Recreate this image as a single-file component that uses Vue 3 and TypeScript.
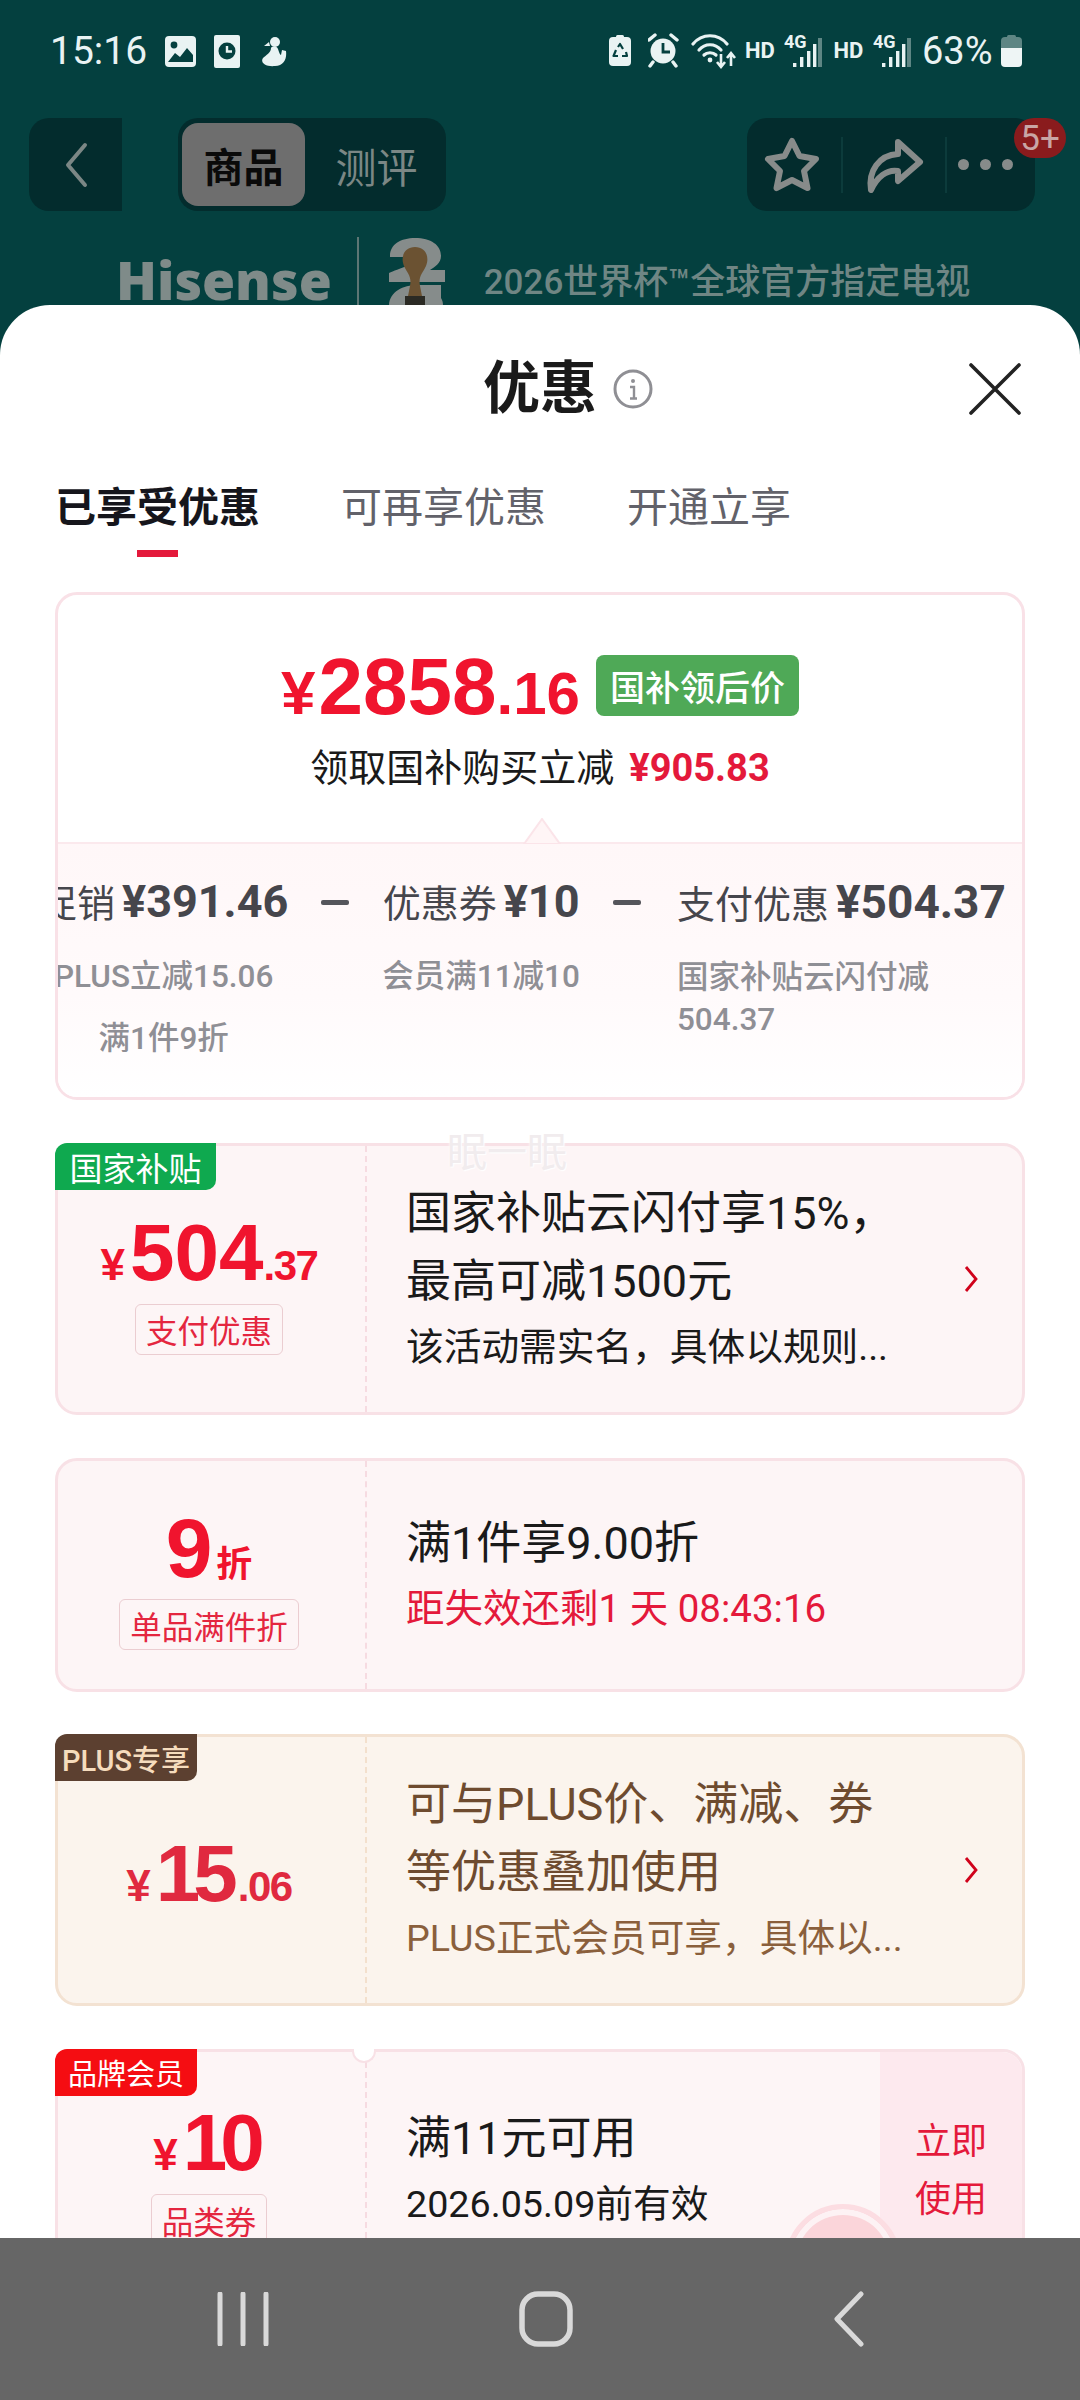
<script setup lang="ts">
interface Coupon {
  kind: string
  tag?: string
  tagKind?: string
  yen?: string
  major: string
  minor: string
  badge?: string
  title: string[]
  desc?: string
  timer?: string
  arrow?: boolean
  action?: boolean
}

const coupons: Coupon[] = [
  {
    kind: 'red', tag: '国家补贴', tagKind: 'tag-green', yen: '¥', major: '504', minor: '.37', badge: '支付优惠',
    title: ['国家补贴云闪付享15%，', '最高可减1500元'], desc: '该活动需实名，具体以规则...', arrow: true
  },
  {
    kind: 'red short', major: '9', minor: '折', badge: '单品满件折',
    title: ['满1件享9.00折'], timer: '距失效还剩1 天 08:43:16'
  },
  {
    kind: 'plus narrow', tag: 'PLUS专享', tagKind: 'tag-brown', yen: '¥', major: '15', minor: '.06',
    title: ['可与PLUS价、满减、券', '等优惠叠加使用'], desc: 'PLUS正式会员可享，具体以...', arrow: true
  },
  {
    kind: 'red member narrow', tag: '品牌会员', tagKind: 'tag-crimson', yen: '¥', major: '10', minor: '', badge: '品类券',
    title: ['满11元可用'], desc: '2026.05.09前有效', action: true
  }
]

const tabs: string[] = ['已享受优惠', '可再享优惠', '开通立享']
const bars = [
  { x: 13, h: 4, y: 32 },
  { x: 20, h: 10, y: 26 },
  { x: 27, h: 16, y: 20 },
  { x: 33, h: 23, y: 13 }
]
</script>

<template>
  <div class="page">
    <div class="status">
      <div class="status-left">
        <span class="time">15:16</span>
        <svg class="ic-a" width="31" height="40" viewBox="0 0 31 40">
          <rect x="0" y="5" width="31" height="31" rx="4" fill="#e9f3f3" />
          <circle cx="9" cy="14" r="3.4" fill="#04403f" />
          <path d="M3 31 L10 22 L15 26 L22 17 L28 24 L28 31 Z" fill="#04403f" />
        </svg>
        <svg class="ic-b" width="26" height="40" viewBox="0 0 26 40">
          <rect x="0" y="4" width="26" height="33" rx="2" fill="#e9f3f3" />
          <circle cx="13" cy="20" r="8.5" fill="#04403f" />
          <path d="M13 15 V20.5 H18" fill="none" stroke="#e9f3f3" stroke-width="2.4" />
        </svg>
        <svg class="ic-c" width="27" height="40" viewBox="0 0 27 40">
          <circle cx="14" cy="11" r="5" fill="#e9f3f3" />
          <path d="M8 11 L3 15 L9 15 Z" fill="#e9f3f3" />
          <path d="M10 17 C11 15 16 15 17 18 C18 21 19 24 20 24 L21 19 L25 20 C26 28 23 35 14 35 C4 36 -1 31 2 27 C5 24 10 22 10 17 Z" fill="#e9f3f3" />
        </svg>
      </div>
      <div class="status-right">
        <svg width="39" height="40" viewBox="0 0 39 40">
          <rect x="7" y="4" width="8" height="4" rx="1.5" fill="#e9f3f3" />
          <rect x="0" y="6" width="22" height="29" rx="4" fill="#e9f3f3" />
          <path d="M9 16 L11 13 L14 18 M17 21 L18 25 H13 M9 25 H4.500 L7 19" fill="none" stroke="#04403f" stroke-width="2.2" stroke-linejoin="round" />
        </svg>
        <svg width="43" height="40" viewBox="0 0 43 40">
          <circle cx="15" cy="20" r="12.5" fill="#e9f3f3" />
          <path d="M15 12 V21 H22" fill="none" stroke="#04403f" stroke-width="2.8" />
          <path d="M1 9 L7 4 M23 4 L29 9 M5 31 L2 35 M25 31 L28 35" stroke="#e9f3f3" stroke-width="3.4" stroke-linecap="round" fill="none" />
        </svg>
        <svg width="54" height="40" viewBox="0 0 54 40">
          <path d="M2 13 C11 2 27 2 36 13" fill="none" stroke="#e9f3f3" stroke-width="3.2" stroke-linecap="round" />
          <path d="M8 19 C14 12 24 12 30 19" fill="none" stroke="#e9f3f3" stroke-width="3.2" stroke-linecap="round" />
          <path d="M13 24 C16 21 22 21 25 24" fill="none" stroke="#e9f3f3" stroke-width="3.2" stroke-linecap="round" />
          <circle cx="19" cy="29" r="2.4" fill="#e9f3f3" />
          <path d="M30 23 V35 M26 31 L30 36 L34 31 M40 35 V23 M36 27 L40 22 L44 27" fill="none" stroke="#e9f3f3" stroke-width="2.6" />
        </svg>
        <template v-for="n in 2" :key="n">
          <svg :width="n === 1 ? 39 : 40" height="40" viewBox="0 0 39 40">
            <text x="0" y="27" class="hd">HD</text>
          </svg>
          <svg width="49" height="40" viewBox="0 0 49 40">
            <text x="0" y="17" class="fg">4G</text>
            <rect v-for="b in bars" :key="b.x" :x="b.x - 4" :y="b.y" width="3.4" :height="b.h" fill="#e9f3f3" />
            <rect x="34" y="7" width="4" height="29" fill="#5e8684" />
          </svg>
        </template>
        <span class="pct">63%</span>
        <svg width="21" height="40" viewBox="0 0 21 40">
          <rect x="6" y="4" width="9" height="4" rx="1.5" fill="#5e8684" />
          <path d="M0 17 V10 Q0 6 4 6 H17 Q21 6 21 10 V17 Z" fill="#5e8684" />
          <path d="M0 17 H21 V32 Q21 36 17 36 H4 Q0 36 0 32 Z" fill="#eef5f5" />
        </svg>
      </div>
    </div>

    <div class="topbar">
      <div class="back">
        <svg width="26" height="46" viewBox="0 0 26 46">
          <path d="M22 3 L5 23 L22 43" fill="none" stroke="#7b8785" stroke-width="4" stroke-linecap="round" stroke-linejoin="round" />
        </svg>
      </div>
      <div class="seg">
        <span class="seg-on">商品</span>
        <span class="seg-off">测评</span>
      </div>
      <div class="actions">
        <svg width="60" height="60" viewBox="0 0 60 60">
          <path d="M30 6 L37.500 21 L54 24 L42 36 L45.500 53 L30 45 L14.500 53 L18 36 L6 24 L22.500 21 Z" fill="none" stroke="#878b8a" stroke-width="6" stroke-linejoin="round" />
        </svg>
        <i class="sep"></i>
        <svg width="65" height="60" viewBox="0 0 65 60">
          <path d="M37 7 L59 27 L37 46 V36 C26 34 16 42 10 55 C7 36 18 20 37 19 Z" fill="none" stroke="#878b8a" stroke-width="6" stroke-linejoin="round" />
        </svg>
        <i class="sep"></i>
        <div class="dots"><i></i><i></i><i></i></div>
        <span class="count">5+</span>
      </div>
    </div>

    <div class="banner">
      <span class="brand">Hisense</span>
      <i class="brand-sep"></i>
      <svg class="cup" width="60" height="68" viewBox="0 0 60 68">
        <path d="M5 18 C5 6 16 0 30 0 C46 0 56 7 56 18 C56 25 50 29 45 32 H60 V44 H4 V35 C12 31 34 25 38 19 L22 19 H5 Z" fill="#868c8b" />
        <path d="M4 68 C4 54 18 47 32 47 H56 V60 C58 63 58 66 58 68 Z" fill="#868c8b" />
        <path d="M30 9 C40 9 45 18 41 28 C38 35 33 38 35 48 L37 58 H23 L25 48 C27 38 22 35 19 28 C15 18 20 9 30 9 Z" fill="#6b5232" />
        <path d="M20 58 H40 V68 H20 Z" fill="#2b2a24" />
      </svg>
      <span class="slogan">2026世界杯™全球官方指定电视</span>
    </div>

    <main class="sheet">
      <span class="float-tip">眠一眠</span>

      <header class="head">
        <span></span>
        <h1 class="title">优惠</h1>
        <div class="head-right">
          <svg width="40" height="40" viewBox="0 0 40 40">
            <circle cx="20" cy="20" r="18" fill="none" stroke="#8f8f94" stroke-width="3" />
            <circle cx="20" cy="12" r="2" fill="#8f8f94" />
            <path d="M17 18 H21 V29 M17 29.500 H24" fill="none" stroke="#8f8f94" stroke-width="2.4" />
          </svg>
          <svg width="52" height="52" viewBox="0 0 52 52">
            <path d="M2 2 L50 50 M50 2 L2 50" stroke="#222" stroke-width="3.600" stroke-linecap="round" />
          </svg>
        </div>
      </header>

      <nav class="tabs">
        <div v-for="(t, i) in tabs" :key="t" class="tab" :class="{ active: i === 0 }">
          <span>{{ t }}</span>
          <i v-if="i === 0"></i>
        </div>
      </nav>

      <section class="summary">
        <div class="sum-top">
          <div class="sum-price">
            <span class="price"><small class="y">¥</small>2858<small class="d">.16</small></span>
            <span class="green">国补领后价</span>
          </div>
          <p class="sum-line">领取国补购买立减<b>¥905.83</b></p>
          <svg class="arrow-up" width="40" height="26" viewBox="0 0 40 26">
            <path d="M2 26 L20 1 L38 26 Z" fill="#fff5f6" stroke="#fbe4e9" stroke-width="2" />
          </svg>
        </div>
        <div class="sum-bottom">
          <div class="sum-row">
            <div class="col center">
              <div class="col-h">促销<b>¥391.46</b></div>
              <p>PLUS立减15.06</p>
              <p class="gap">满1件9折</p>
            </div>
            <i class="minus"></i>
            <div class="col center">
              <div class="col-h">优惠券<b>¥10</b></div>
              <p>会员满11减10</p>
            </div>
            <i class="minus"></i>
            <div class="col last">
              <div class="col-h">支付优惠<b>¥504.37</b></div>
              <p class="wrap">国家补贴云闪付减504.37</p>
            </div>
          </div>
        </div>
      </section>

      <section class="list">
        <article v-for="c in coupons" :key="c.major" class="coupon" :class="c.kind">
          <span v-if="c.tag" class="tag" :class="c.tagKind">{{ c.tag }}</span>
          <div class="left">
            <div class="amount">
              <small v-if="c.yen" class="a-y">{{ c.yen }}</small><span class="a-m">{{ c.major }}</span><small class="a-d">{{ c.minor }}</small>
            </div>
            <span v-if="c.badge" class="badge">{{ c.badge }}</span>
          </div>
          <div class="right">
            <div class="body">
              <div v-for="t in c.title" :key="t" class="c-title">{{ t }}</div>
              <div v-if="c.desc" class="c-desc">{{ c.desc }}</div>
              <div v-if="c.timer" class="c-timer">{{ c.timer }}</div>
            </div>
            <svg v-if="c.arrow" class="chev" width="14" height="26" viewBox="0 0 14 26">
              <path d="M2 1 L12 13 L2 25" fill="none" stroke="#d0021b" stroke-width="2.800" />
            </svg>
            <div v-if="c.action" class="use">立即<br />使用</div>
          </div>
          <template v-if="c.action">
            <i class="notch"></i>
            <i class="stamp"></i>
          </template>
        </article>
      </section>
    </main>

    <footer class="navbar">
      <div class="nav-cell">
        <svg width="52" height="54" viewBox="0 0 52 54">
          <path d="M3 2 V52 M26 2 V52 M49 2 V52" stroke="#d9d9d9" stroke-width="5" stroke-linecap="round" />
        </svg>
      </div>
      <div class="nav-cell">
        <svg width="54" height="56" viewBox="0 0 54 56">
          <rect x="3" y="3" width="48" height="50" rx="16" fill="none" stroke="#d9d9d9" stroke-width="5.500" />
        </svg>
      </div>
      <div class="nav-cell">
        <svg width="32" height="56" viewBox="0 0 32 56">
          <path d="M28 3 L4 28 L28 53" fill="none" stroke="#d9d9d9" stroke-width="5" stroke-linecap="round" stroke-linejoin="round" />
        </svg>
      </div>
    </footer>
  </div>
</template>

<style scoped>
.page, .page * { box-sizing: border-box; }
.page {
  width: 1080px;
  height: 2400px;
  overflow: hidden;
  display: flex;
  flex-direction: column;
  background: #04403f;
  font-family: Roboto, "Noto Sans CJK SC", sans-serif;
  color: #1a1a1a;
}
i { display: block; font-style: normal; }
p, h1 { margin: 0; }

.status {
  height: 102px;
  flex: none;
  display: flex;
  justify-content: space-between;
  align-items: center;
  padding: 0 58px 0 50px;
  color: #e9f3f3;
}
.status-left, .status-right { display: flex; align-items: center; }
.time { font-size: 39px; width: 96px; white-space: nowrap; }
.ic-a { margin-left: 19px; }
.ic-b { margin-left: 18px; }
.ic-c { margin-left: 21px; }
.hd { font: 700 22px Roboto, sans-serif; fill: #e9f3f3; }
.fg { font: 700 18px Roboto, sans-serif; fill: #e9f3f3; }
.pct { font-size: 38px; width: 79px; white-space: nowrap; }

.topbar {
  flex: none;
  height: 93px;
  margin-top: 16px;
  padding: 0 45px 0 29px;
  display: flex;
  align-items: stretch;
}
.back {
  width: 93px;
  background: #032c2d;
  border-radius: 20px 0 0 20px;
  display: flex;
  align-items: center;
  justify-content: center;
}
.seg {
  margin-left: 56px;
  width: 268px;
  background: #032c2d;
  border-radius: 20px;
  padding: 5px 4px;
  display: flex;
  align-items: center;
}
.seg-on {
  width: 123px;
  height: 83px;
  border-radius: 16px;
  background: #6e6e6e;
  color: #0a0a0a;
  font-size: 40px;
  font-weight: 700;
  display: flex;
  align-items: center;
  justify-content: center;
}
.seg-off {
  flex: 1;
  text-align: center;
  color: #7b8785;
  font-size: 41px;
  padding-left: 6px;
}
.actions {
  margin-left: auto;
  width: 288px;
  position: relative;
  background: #032c2d;
  border-radius: 20px;
  display: flex;
  align-items: center;
  padding-left: 15px;
}
.sep { width: 2px; height: 56px; background: #0c3b3b; margin: 0 18px 0 19px; flex: none; }
.dots { display: flex; gap: 11px; margin-left: -7px; }
.dots i { width: 11px; height: 11px; border-radius: 50%; background: #878b8a; }
.count {
  position: absolute;
  right: -31px;
  top: 0;
  width: 52px;
  height: 40px;
  border-radius: 20px;
  background: #8a1b1d;
  color: #c9a5a5;
  font-size: 35px;
  display: flex;
  align-items: center;
  justify-content: center;
}

.banner {
  flex: none;
  height: 94px;
  padding-left: 116px;
  display: flex;
  align-items: flex-start;
  overflow: hidden;
}
.brand {
  margin: 47px 25px 0 0;
  font: 800 53.500px/44px "Open Sans", sans-serif;
  color: #7f8b89;
  white-space: nowrap;
}
.brand-sep { width: 2px; height: 80px; margin-top: 26px; background: #5d7674; flex: none; }
.cup { margin: 27px 0 0 26px; flex: none; }
.slogan {
  margin: 50px 0 0 39px;
  font-size: 35px;
  line-height: 44px;
  font-weight: 500;
  color: #6f8684;
  white-space: nowrap;
}

.sheet {
  flex: 1;
  min-height: 0;
  position: relative;
  overflow: hidden;
  background: #fff;
  border-radius: 50px 50px 0 0;
  padding: 0 55px;
}
.float-tip {
  position: absolute;
  left: 447px;
  top: 826px;
  z-index: 3;
  font-size: 40px;
  line-height: 44px;
  color: #f1ecee;
  text-shadow: 0 0 3px #fff, 1px 1px 1px #fff;
}
.head {
  height: 168px;
  display: grid;
  grid-template-columns: 1fr auto 1fr;
  align-items: center;
}
.title { font-size: 57px; font-weight: 700; line-height: 60px; }
.head-right {
  display: flex;
  align-items: center;
  justify-content: space-between;
  padding: 0 4px 0 16px;
}
.tabs { display: flex; gap: 81px; }
.tab {
  display: flex;
  flex-direction: column;
  align-items: center;
  font-size: 41px;
  line-height: 70px;
  color: #62626a;
  height: 84px;
}
.tab.active { color: #16161c; font-weight: 700; }
.tab i { width: 41px; height: 7px; margin-top: 7px; background: #e4193b; flex: none; }

.summary {
  margin-top: 35px;
  height: 508px;
  border: 3px solid #f9e1e7;
  border-radius: 22px;
  overflow: hidden;
  display: flex;
  flex-direction: column;
}
.sum-top {
  height: 249px;
  flex: none;
  position: relative;
  padding-top: 50px;
  display: flex;
  flex-direction: column;
  align-items: center;
  border-bottom: 2px solid #fbe9ed;
}
.sum-price { display: flex; align-items: center; height: 90px; }
.price {
  font: 700 80px/90px "Liberation Sans", sans-serif;
  color: #f0142e;
}
.price .y { font-size: 62px; margin-right: 3px; }
.price .d { font-size: 60px; }
.green {
  margin-left: 16px;
  height: 61px;
  width: 203px;
  background: #4fa957;
  border-radius: 8px;
  color: #fff;
  font-size: 35px;
  font-weight: 500;
  display: flex;
  align-items: center;
  justify-content: center;
  margin-top: -10px;
  white-space: nowrap;
}
.sum-line {
  margin-top: 8px;
  font-size: 38px;
  line-height: 50px;
  color: #1a1a1a;
  white-space: nowrap;
}
.sum-line b { margin-left: 15px; color: #e4193b; font-weight: 700; font-size: 38px; }
.arrow-up { position: absolute; left: 464px; bottom: -2px; }
.sum-bottom {
  flex: 1;
  overflow: hidden;
  background: linear-gradient(#fff7f8, #fffafb 60%, #fff);
}
.sum-row {
  display: flex;
  align-items: flex-start;
  gap: 33px;
  margin-left: -19px;
  padding-top: 33px;
  width: 1100px;
}
.col { flex: none; display: flex; flex-direction: column; color: #8f8f95; }
.col.center { align-items: center; }
.col.last { margin-left: 3px; }
.col-h {
  font-size: 38px;
  line-height: 50px;
  color: #46464c;
  white-space: nowrap;
}
.col-h b { font-size: 45px; font-weight: 700; margin-left: 7px; }
.col.last .col-h b { font-size: 46px; }
.col p {
  font-size: 31.500px;
  line-height: 42px;
  margin-top: 27px;
  font-weight: 500;
  white-space: nowrap;
}
.col p.gap { margin-top: 20px; }
.col p.wrap { white-space: normal; width: 260px; word-break: break-all; }
.minus { flex: none; width: 28px; height: 5px; background: #55555b; margin-top: 23px; border-radius: 2px; }

.list { margin-top: 43px; display: flex; flex-direction: column; gap: 42.500px; }
.coupon {
  height: 272px;
  flex: none;
  position: relative;
  display: flex;
  border: 3px solid #f8e1e6;
  border-radius: 22px;
  background: #fdf5f6;
}
.coupon.short { height: 234px; }
.coupon.member { height: 242px; }
.coupon.plus { background: #fbf4ed; border-color: #f3e2d2; }
.tag {
  position: absolute;
  left: -3px;
  top: -3px;
  width: 161px;
  height: 47px;
  border-radius: 12px 0 10px 0;
  color: #fff;
  font-size: 33px;
  display: flex;
  align-items: center;
  justify-content: center;
  white-space: nowrap;
}
.tag-green { background: #0fa94f; }
.tag-brown { width: 142px; background: #5c4030; color: #f6dcbd; font-size: 29px; font-weight: 500; }
.tag-crimson { width: 142px; background: #f50d12; font-size: 29px; }
.left {
  flex: none;
  width: 309px;
  padding-right: 5px;
  border-right: 2px dashed #f6dbe1;
  display: flex;
  flex-direction: column;
  align-items: center;
  justify-content: center;
}
.plus .left { border-right-color: #f3e0cd; }
.amount {
  height: 90px;
  font: 700 80px/98px "Liberation Sans", sans-serif;
  color: #f0142e;
  white-space: nowrap;
}
.plus .amount { color: #e0293f; }
.narrow .a-m { letter-spacing: -7px; margin-right: 7px; }
.a-y { font-size: 44px; margin-right: 5px; }
.a-d { font-size: 42px; letter-spacing: -1.500px; }
.short .a-m { font-size: 84px; }
.short .a-d { font-size: 36px; font-family: Roboto, "Noto Sans CJK SC", sans-serif; margin-left: 4px; letter-spacing: 0; }
.badge {
  margin-top: 10px;
  height: 51px;
  padding: 0 10px;
  border: 1px solid #ebcdd1;
  border-radius: 6px;
  color: #e4263f;
  font-size: 31.500px;
  display: flex;
  align-items: center;
  white-space: nowrap;
}
.right {
  flex: 1;
  min-width: 0;
  display: flex;
  align-items: center;
  padding-left: 39px;
  padding-right: 44px;
}
.body { flex: 1; min-width: 0; }
.c-title { font-size: 45px; line-height: 68px; white-space: nowrap; }
.c-desc { font-size: 37.700px; line-height: 62px; white-space: nowrap; }
.c-timer { font-size: 38.500px; line-height: 62px; color: #e4193b; white-space: nowrap; }
.plus .c-title { color: #6e4b2f; }
.plus .c-desc { color: #8a5f3c; }
.chev { flex: none; }
.member .right { padding-right: 0; align-self: stretch; }
.use {
  align-self: stretch;
  flex: none;
  width: 142px;
  padding-top: 61px;
  text-align: center;
  color: #e4193b;
  font-size: 36px;
  line-height: 58px;
  background: #fde9ee;
  border-radius: 0 20px 20px 0;
}
.notch {
  position: absolute;
  left: 294px;
  top: -3px;
  width: 24px;
  height: 14px;
  background: #fff;
  border: 2px solid #f8e1e6;
  border-top: 0;
  border-radius: 0 0 12px 12px;
}
.stamp {
  position: absolute;
  left: 727px;
  top: 152px;
  width: 116px;
  height: 116px;
  border-radius: 50%;
  border: 5px solid #fcdde2;
  box-shadow: inset 0 0 0 6px #fdf2f4;
  background: #fbd5da;
}

.navbar {
  flex: none;
  height: 162px;
  background: #666;
  display: flex;
  align-items: center;
  justify-content: center;
  padding-left: 12px;
  position: relative;
  z-index: 2;
}
.nav-cell { width: 303px; display: flex; justify-content: center; }
</style>
